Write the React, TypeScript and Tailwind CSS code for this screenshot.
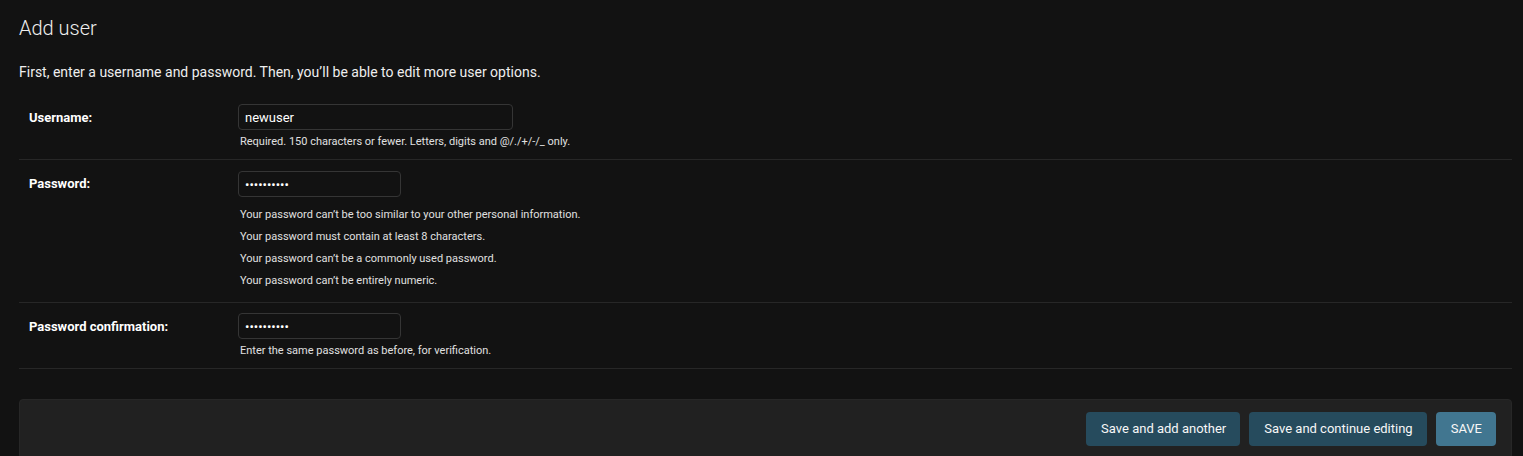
import React from "react";

function Row({ label, children }: { label: string; children: React.ReactNode }) {
  return (
    <div className="flex border-b border-[#272727] px-[10px] py-[10px]">
      <div className="w-[209px] shrink-0 pt-[6px] text-[13px] font-bold leading-[16px] text-white">{label}</div>
      <div className="flex flex-col">{children}</div>
    </div>
  );
}

function Help({ children, className = "" }: { children: React.ReactNode; className?: string }) {
  return <div className={"pl-[2px] text-[11px] leading-[14px] text-[#e0e0e0] " + className}>{children}</div>;
}

export default function App() {
  return (
    <div
      className="min-h-[456px] bg-[#121212] pl-[19px] pr-[11px] text-[#eeeeee]"
      style={{ fontFamily: "Roboto, 'Liberation Sans', sans-serif" }}
    >
      <h1 className="pt-[16px] text-[20px] font-light leading-[24px] text-[#eeeeee]">Add user</h1>
      <p className="mt-[22px] mb-[12px] text-[14px] leading-[20px]">
        First, enter a username and password. Then, you’ll be able to edit more user options.
      </p>
      <div>
        <Row label="Username:">
          <input
            readOnly
            value="newuser"
            className="h-[26px] w-[275px] rounded-[4px] border border-[#353535] bg-[#121212] px-[6px] text-[13px] text-white outline-none"
          />
          <Help className="mt-[5px]">Required. 150 characters or fewer. Letters, digits and @/./+/-/_ only.</Help>
        </Row>
        <Row label="Password:">
          <input
            readOnly
            type="password"
            value="••••••••••"
            className="mt-[1px] h-[26px] w-[163px] rounded-[4px] border border-[#353535] bg-[#121212] px-[6px] text-[13px] text-white outline-none"
          />
          <div className="mt-[11px] flex flex-col gap-[8px]">
            <Help>Your password can’t be too similar to your other personal information.</Help>
            <Help>Your password must contain at least 8 characters.</Help>
            <Help>Your password can’t be a commonly used password.</Help>
            <Help>Your password can’t be entirely numeric.</Help>
          </div>
          <div className="h-[4px]" />
        </Row>
        <Row label="Password confirmation:">
          <input
            readOnly
            type="password"
            value="••••••••••"
            className="h-[26px] w-[163px] rounded-[4px] border border-[#353535] bg-[#121212] px-[6px] text-[13px] text-white outline-none"
          />
          <Help className="mt-[5px]">Enter the same password as before, for verification.</Help>
        </Row>
      </div>
      <div className="mt-[30px] flex justify-end gap-[9px] rounded-[4px] border border-[#272727] bg-[#212121] px-[15px] py-[12px]">
        <button className="h-[34px] rounded-[4px] bg-[#264b5d] pl-[15px] pr-[14px] text-[13px] text-[#f7f7f7]">Save and add another</button>
        <button className="h-[34px] rounded-[4px] bg-[#264b5d] pl-[15px] pr-[14px] text-[13px] text-[#f7f7f7]">Save and continue editing</button>
        <button className="h-[34px] rounded-[4px] bg-[#417690] pl-[15px] pr-[14px] text-[13px] text-[#f7f7f7]">SAVE</button>
      </div>
    </div>
  );
}
